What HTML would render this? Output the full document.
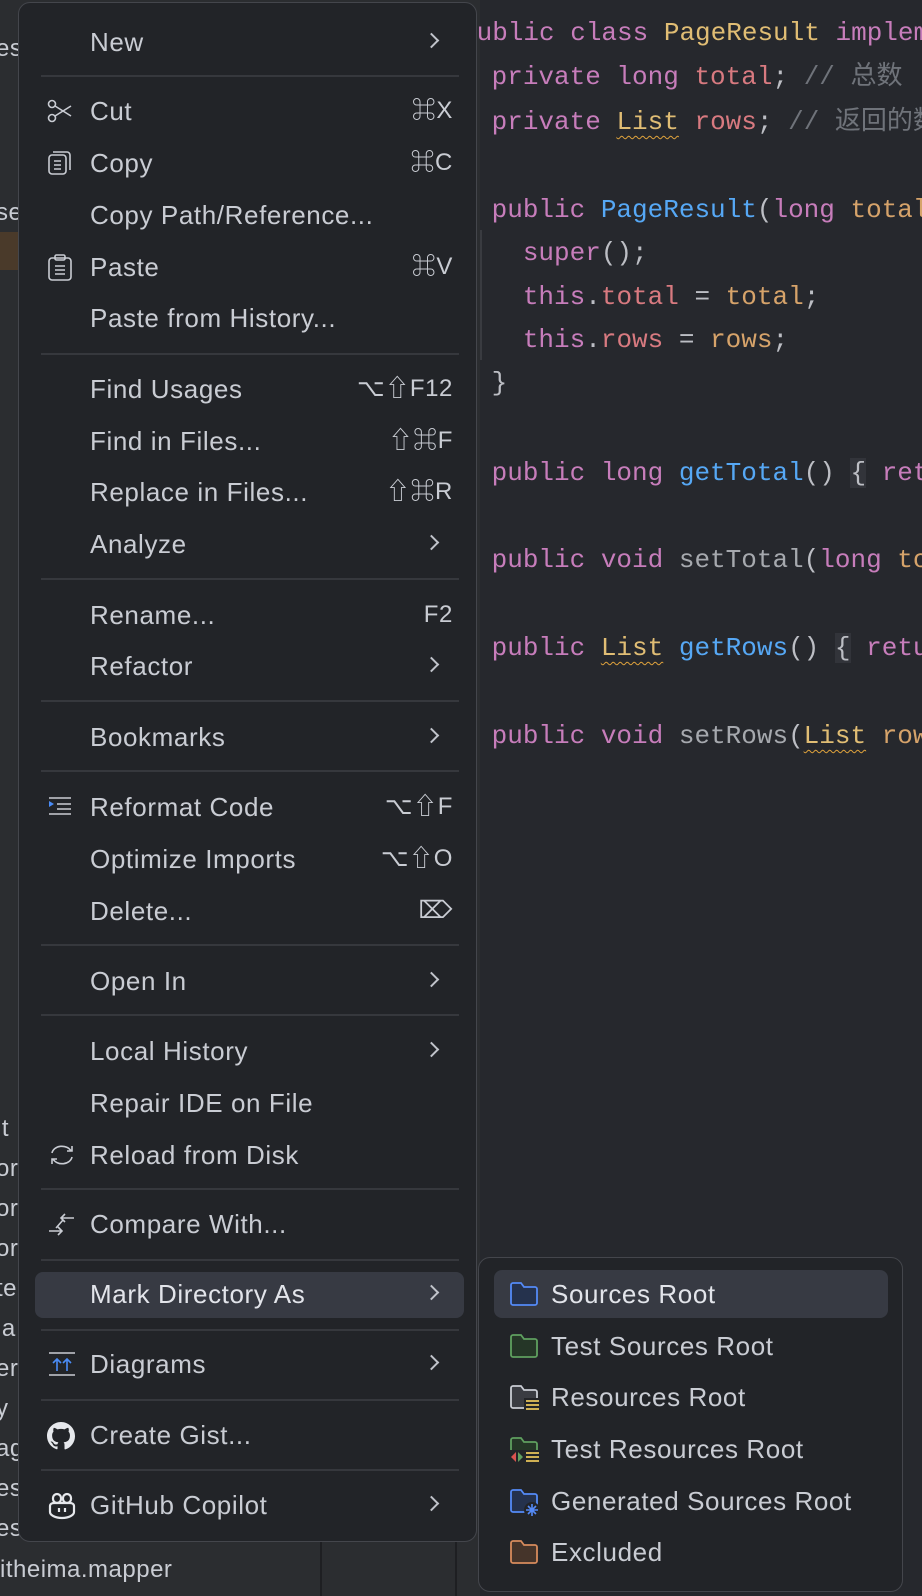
<!DOCTYPE html>
<html><head><meta charset="utf-8"><style>
*{margin:0;padding:0;box-sizing:border-box}
body{width:922px;height:1596px;overflow:hidden;background:#26282d;position:relative;font-family:"Liberation Sans","Noto Sans CJK SC",sans-serif}
.left{position:absolute;left:0;top:0;width:480px;height:1596px;background:#2b2d30;overflow:hidden}
.lt{position:absolute;left:-4px;color:#c9ccd3;font-size:24px;line-height:30px;letter-spacing:0.5px}
.code{position:absolute;left:476px;top:0;width:446px;height:800px;overflow:hidden;font-family:"Liberation Mono","Noto Sans CJK SC",monospace;font-size:26px;color:#bcbec4;white-space:pre}
.code div{position:absolute;left:0;height:44px;line-height:44px}
.k{color:#c77dbb}.c{color:#e0bd74}.f{color:#d87a80}.p{color:#d6a36a}.m{color:#56a8f5}.g{color:#6f737a}.s{color:#a6a9ae}
.w{text-decoration:underline wavy #e0a33c;text-underline-offset:6px;text-decoration-thickness:1px}
.menu{position:absolute;left:18px;top:2px;width:459px;height:1540px;background:#222428;border:1.5px solid #44464c;border-radius:12px}
.it{position:absolute;left:0;width:456px;height:52px;line-height:52px;font-size:26px;letter-spacing:0.6px;color:#c9ccd3}
.it .t{position:absolute;left:71px}
.it .sc{position:absolute;right:22px;font-size:24px}
.it .ch{position:absolute;left:407px;top:19px;width:11px;height:11px;border-right:2px solid #c0c3ca;border-top:2px solid #c0c3ca;transform:rotate(45deg)}
.it svg{position:absolute;left:28px;top:13px}
.sep{position:absolute;left:22px;width:418px;height:2px;background:#36383d}
.hl{position:absolute;left:16px;top:1269px;width:429px;height:46px;background:#373a43;border-radius:8px}
.sub{position:absolute;left:478px;top:1257px;width:425px;height:335px;background:#222428;border:1.5px solid #44464c;border-radius:12px}
.si{position:absolute;left:0;width:420px;height:52px;line-height:52px;font-size:26px;letter-spacing:0.6px;color:#c9ccd3}
.si .t{position:absolute;left:72px}
.si svg{position:absolute;left:30px;top:13px}
</style></head><body>
<div class="left">
<div class="lt" style="top:34px">es</div>
<div class="lt" style="top:198px">se</div>
<div style="position:absolute;left:0;top:232px;width:20px;height:38px;background:#4a3a2a"></div>
<div class="lt" style="top:355px">l</div>
<div class="lt" style="top:1114px">it</div>
<div class="lt" style="top:1154px">or</div>
<div class="lt" style="top:1194px">or</div>
<div class="lt" style="top:1234px">or</div>
<div class="lt" style="top:1274px">te</div>
<div class="lt" style="top:1314px">ia</div>
<div class="lt" style="top:1354px">er</div>
<div class="lt" style="top:1394px">y</div>
<div class="lt" style="top:1434px">ag</div>
<div class="lt" style="top:1474px">es</div>
<div class="lt" style="top:1514px">es</div>
<div class="lt" style="top:1555px;left:0">itheima.mapper</div>
<div style="position:absolute;left:320px;top:1542px;width:2px;height:54px;background:#1e1f22"></div>
<div style="position:absolute;left:455px;top:1542px;width:2px;height:54px;background:#1e1f22"></div>
</div>
<div class="code">
<div style="top:11px;left:-15px"><span class="k">public class </span><span class="c">PageResult </span><span class="k">implements</span></div>
<div style="top:55px"> <span class="k">private long </span><span class="f">total</span>; <span class="g">// 总数</span></div>
<div style="top:100px"> <span class="k">private </span><span class="c w">List</span> <span class="f">rows</span>; <span class="g">// 返回的数据</span></div>
<div style="top:188px"> <span class="k">public </span><span class="m">PageResult</span>(<span class="k">long </span><span class="p">total</span></div>
<div style="top:231px">   <span class="k">super</span>();</div>
<div style="top:275px">   <span class="k">this</span>.<span class="f">total</span> = <span class="p">total</span>;</div>
<div style="top:318px">   <span class="k">this</span>.<span class="f">rows</span> = <span class="p">rows</span>;</div>
<div style="top:361px"> }</div>
<div style="top:451px"> <span class="k">public long </span><span class="m">getTotal</span>() <span style="background:#32343a">{</span> <span class="k">return</span></div>
<div style="top:538px"> <span class="k">public void </span><span class="s">setTotal</span>(<span class="k">long </span><span class="p">total</span></div>
<div style="top:626px"> <span class="k">public </span><span class="c w">List</span> <span class="m">getRows</span>() <span style="background:#32343a">{</span> <span class="k">return</span></div>
<div style="top:714px"> <span class="k">public void </span><span class="s">setRows</span>(<span class="c w">List</span> <span class="p">rows</span></div>
<div style="position:absolute;left:4px;top:230px;width:2px;height:130px;background:#393b40"></div>
</div>

<div class="menu">
<div class="hl"></div>
<div class="sep" style="top:72px"></div><div class="sep" style="top:350px"></div><div class="sep" style="top:575px"></div><div class="sep" style="top:697px"></div><div class="sep" style="top:767px"></div><div class="sep" style="top:941px"></div><div class="sep" style="top:1011px"></div><div class="sep" style="top:1185px"></div><div class="sep" style="top:1256px"></div><div class="sep" style="top:1326px"></div><div class="sep" style="top:1396px"></div><div class="sep" style="top:1466px"></div>

<div class="it" style="top:13px"><span class="t">New</span><span class="ch"></span></div>
<div class="it" style="top:82px"><svg width="26" height="26" viewBox="0 0 26 26" fill="none" stroke="#c9ccd3" stroke-width="1.6"><circle cx="5" cy="6" r="3.5"/><circle cx="5" cy="20" r="3.5"/><path d="M8 8L24 18M8 18L24 8"/></svg><span class="t">Cut</span><span class="sc">⌘X</span></div>
<div class="it" style="top:134px"><svg width="26" height="26" viewBox="0 0 26 26" fill="none" stroke="#c9ccd3" stroke-width="1.6"><rect x="2" y="5" width="17" height="19" rx="3"/><path d="M6 2h14a3 3 0 0 1 3 3v15M7 11h7M7 15h7M7 19h7"/></svg><span class="t">Copy</span><span class="sc">⌘C</span></div>
<div class="it" style="top:186px"><span class="t">Copy Path/Reference...</span></div>
<div class="it" style="top:238px"><svg width="26" height="28" viewBox="0 0 26 28" fill="none" stroke="#c9ccd3" stroke-width="1.6"><rect x="2" y="4" width="22" height="22" rx="3"/><rect x="8" y="1" width="10" height="5" rx="1.5"/><path d="M8 12h10M8 16h10M8 20h10"/></svg><span class="t">Paste</span><span class="sc">⌘V</span></div>
<div class="it" style="top:289px"><span class="t">Paste from History...</span></div>
<div class="it" style="top:360px"><span class="t">Find Usages</span><span class="sc">⌥⇧F12</span></div>
<div class="it" style="top:412px"><span class="t">Find in Files...</span><span class="sc">⇧⌘F</span></div>
<div class="it" style="top:463px"><span class="t">Replace in Files...</span><span class="sc">⇧⌘R</span></div>
<div class="it" style="top:515px"><span class="t">Analyze</span><span class="ch"></span></div>
<div class="it" style="top:586px"><span class="t">Rename...</span><span class="sc">F2</span></div>
<div class="it" style="top:637px"><span class="t">Refactor</span><span class="ch"></span></div>
<div class="it" style="top:708px"><span class="t">Bookmarks</span><span class="ch"></span></div>
<div class="it" style="top:778px"><svg width="26" height="26" viewBox="0 0 26 26" fill="none" stroke="#c9ccd3" stroke-width="1.6"><path d="M2 7l5 3-5 3z" fill="#4a8cf7" stroke="none"/><path d="M2 4h22M10 10h14M10 15h14M2 20h22"/></svg><span class="t">Reformat Code</span><span class="sc">⌥⇧F</span></div>
<div class="it" style="top:830px"><span class="t">Optimize Imports</span><span class="sc">⌥⇧O</span></div>
<div class="it" style="top:882px"><span class="t">Delete...</span><span class="sc">⌦</span></div>
<div class="it" style="top:952px"><span class="t">Open In</span><span class="ch"></span></div>
<div class="it" style="top:1022px"><span class="t">Local History</span><span class="ch"></span></div>
<div class="it" style="top:1074px"><span class="t">Repair IDE on File</span></div>
<div class="it" style="top:1126px"><svg width="30" height="26" viewBox="0 0 30 26" fill="none" stroke="#c9ccd3" stroke-width="1.6"><path d="M5 11a10 8 0 0 1 19-2M25 15a10 8 0 0 1-19 2M20 9h5V4M10 17H5v5"/></svg><span class="t">Reload from Disk</span></div>
<div class="it" style="top:1195px"><svg width="30" height="26" viewBox="0 0 30 26" fill="none" stroke="#c9ccd3" stroke-width="1.6"><path d="M14 7h13M18 3l-4 4 4 4M2 20h13M11 16l4 4-4 4M9 17l7-8"/></svg><span class="t">Compare With...</span></div>
<div class="it" style="top:1265px;color:#e2e4ea"><span class="t">Mark Directory As</span><span class="ch"></span></div>
<div class="it" style="top:1335px"><svg width="30" height="26" viewBox="0 0 30 26" fill="none" stroke-width="1.6"><path d="M2 2h26M2 24h26" stroke="#c9ccd3"/><path d="M10 20V8M6 12l4-4 4 4M20 20V8M16 12l4-4 4 4" stroke="#4a8cf7"/></svg><span class="t">Diagrams</span><span class="ch"></span></div>
<div class="it" style="top:1406px"><svg width="28" height="28" viewBox="0 0 16 16"><path fill="#e6e8ec" d="M8 0C3.580 0 0 3.58 0 8c0 3.54 2.29 6.53 5.47 7.59.4.07.55-.17.55-.38v-1.33c-2.23.48-2.7-1.07-2.7-1.07-.36-.93-.89-1.17-.89-1.17-.73-.5.06-.49.06-.49.8.06 1.23.83 1.23.83.72 1.23 1.88.87 2.34.67.07-.52.28-.87.51-1.07-1.78-.2-3.65-.89-3.65-3.95 0-.87.31-1.59.82-2.15-.08-.2-.36-1.02.08-2.12 0 0 .67-.21 2.2.82a7.6 7.6 0 0 1 4 0c1.53-1.04 2.2-.82 2.2-.82.44 1.1.16 1.92.08 2.12.51.56.82 1.27.82 2.15 0 3.07-1.87 3.75-3.65 3.95.29.25.54.73.54 1.48v2.2c0 .21.15.46.55.38A8.01 8.01 0 0 0 16 8c0-4.42-3.58-8-8-8z"/></svg><span class="t">Create Gist...</span></div>
<div class="it" style="top:1476px"><svg width="30" height="28" viewBox="0 0 30 28" fill="none" stroke="#e6e8ec" stroke-width="2.2"><rect x="6" y="2" width="8" height="9" rx="4"/><rect x="16" y="2" width="8" height="9" rx="4"/><path d="M3 14c0-2 2-3 4-3h16c2 0 4 1 4 3v6c0 3-5 6-12 6S3 23 3 20z"/><path d="M12 16v4M18 16v4"/></svg><span class="t">GitHub Copilot</span><span class="ch"></span></div>
</div>

<div class="sub">
<div style="position:absolute;left:15px;top:12px;width:394px;height:48px;background:#373a43;border-radius:8px"></div>
<div class="si" style="top:10px;color:#e2e4ea"><svg width="30" height="26" viewBox="0 0 30 26"><path d="M2 4a2 2 0 0 1 2-2h8l3 4h11a2 2 0 0 1 2 2v14a2 2 0 0 1-2 2H4a2 2 0 0 1-2-2z" fill="#25324d" stroke="#548af7" stroke-width="1.8"/></svg><span class="t">Sources Root</span></div>
<div class="si" style="top:62px"><svg width="30" height="26" viewBox="0 0 30 26"><path d="M2 4a2 2 0 0 1 2-2h8l3 4h11a2 2 0 0 1 2 2v14a2 2 0 0 1-2 2H4a2 2 0 0 1-2-2z" fill="#253627" stroke="#5fa05f" stroke-width="1.8"/></svg><span class="t">Test Sources Root</span></div>
<div class="si" style="top:113px"><svg width="32" height="28" viewBox="0 0 32 28"><path d="M2 4a2 2 0 0 1 2-2h8l3 4h11a2 2 0 0 1 2 2v14a2 2 0 0 1-2 2H4a2 2 0 0 1-2-2z" fill="#3a3c42" stroke="#c9ccd3" stroke-width="1.8"/><rect x="15" y="14" width="17" height="14" fill="#222428"/><path d="M17 17h13M17 21h13M17 25h13" stroke="#e8c45a" stroke-width="1.8"/></svg><span class="t">Resources Root</span></div>
<div class="si" style="top:165px"><svg width="32" height="28" viewBox="0 0 32 28"><path d="M2 4a2 2 0 0 1 2-2h8l3 4h11a2 2 0 0 1 2 2v14a2 2 0 0 1-2 2H4a2 2 0 0 1-2-2z" fill="#253627" stroke="#5fa05f" stroke-width="1.8"/><rect x="0" y="14" width="32" height="14" fill="#222428"/><path d="M7 16l-5 5 5 5z" fill="#d9534f"/><path d="M9 16l5 5-5 5z" fill="#5fa05f"/><path d="M17 17h13M17 21h13M17 25h13" stroke="#e8c45a" stroke-width="1.8"/></svg><span class="t">Test Resources Root</span></div>
<div class="si" style="top:217px"><svg width="32" height="30" viewBox="0 0 32 30"><path d="M2 4a2 2 0 0 1 2-2h8l3 4h11a2 2 0 0 1 2 2v14a2 2 0 0 1-2 2H4a2 2 0 0 1-2-2z" fill="#25324d" stroke="#548af7" stroke-width="1.8"/><circle cx="23" cy="22" r="8" fill="#222428"/><path d="M23 16v12M17 22h12M19 18l8 8M27 18l-8 8" stroke="#548af7" stroke-width="1.6"/></svg><span class="t">Generated Sources Root</span></div>
<div class="si" style="top:268px"><svg width="30" height="26" viewBox="0 0 30 26"><path d="M2 4a2 2 0 0 1 2-2h8l3 4h11a2 2 0 0 1 2 2v14a2 2 0 0 1-2 2H4a2 2 0 0 1-2-2z" fill="#45342a" stroke="#d68a5c" stroke-width="1.8"/></svg><span class="t">Excluded</span></div>
</div>
</body></html>
